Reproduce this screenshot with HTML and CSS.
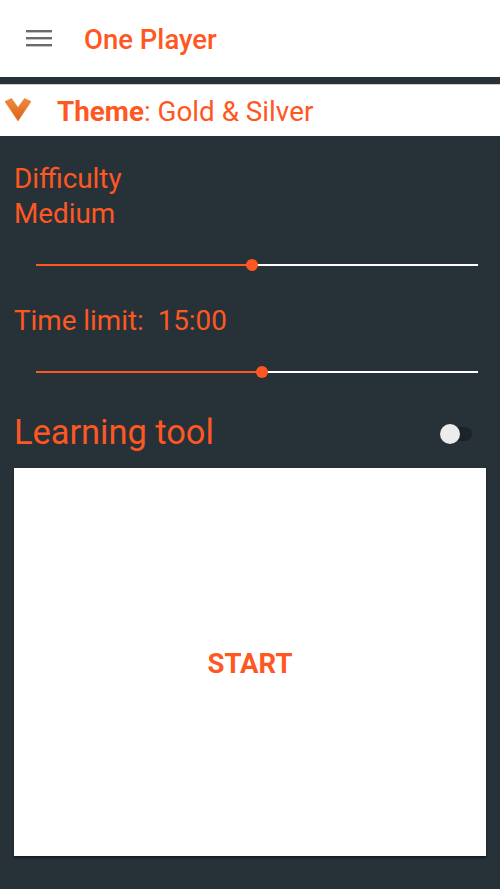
FILE: index.html
```html
<!DOCTYPE html>
<html>
<head>
<meta charset="utf-8">
<link rel="stylesheet" href="styles.css">
</head>
<body>
<header class="appbar">
  <svg class="menu" width="26" height="20" viewBox="0 0 26 20"><rect x="0" y="2" width="26" height="2.4" fill="#6b6b6b"/><rect x="0" y="9" width="26" height="2.4" fill="#6b6b6b"/><rect x="0" y="16" width="26" height="2.4" fill="#6b6b6b"/></svg>
  <span class="title">One Player</span>
</header>
<div class="theme">
  <svg class="chev" width="26" height="24" viewBox="0 0 26 24">
    <defs><linearGradient id="g" x1="0" y1="0" x2="0" y2="1"><stop offset="0" stop-color="#f08a3a"/><stop offset="1" stop-color="#d8641e"/></linearGradient></defs>
    <polygon points="0,3.5 6.5,0.5 13,9.5 19.5,0.5 26,3.5 13,23" fill="url(#g)" stroke="#e8782c" stroke-width="0.6" stroke-linejoin="round"/>
  </svg>
  <span class="theme-text"><b>Theme</b>: Gold &amp; Silver</span>
</div>
<main class="content">
  <div class="label two">Difficulty<br>Medium</div>
  <div class="slider s1"><div class="fill" style="width:216px"></div><div class="thumb" style="left:216px"></div></div>
  <div class="label">Time limit:&nbsp; 15:00</div>
  <div class="slider s2"><div class="fill" style="width:226px"></div><div class="thumb" style="left:226px"></div></div>
  <div class="learn">
    <span class="learn-text">Learning tool</span>
    <div class="toggle"><div class="knob"></div></div>
  </div>
  <div class="card"><span class="start">START</span></div>
</main>
</body>
</html>
```
FILE: styles.css
```css
* { box-sizing: border-box; }
html, body { margin: 0; padding: 0; }
body {
  width: 500px;
  height: 889px;
  background: #263238;
  font-family: Roboto, "Noto Sans", sans-serif;
  color: #ff5722;
  overflow: hidden;
}
.appbar {
  height: 77px;
  background: #fff;
  display: flex;
  align-items: center;
  padding-left: 26px;
}
.menu { display: block; margin-top: -2px; }
.title {
  margin-left: 32px;
  font-size: 27.5px;
  font-weight: 500;
  color: #ff5722;
  margin-top: 2px;
}
.theme {
  margin-top: 7px;
  height: 52px;
  background: #fff;
  display: flex;
  align-items: center;
  padding-left: 5px;
  border-top: 1px solid #c9cdd0;
}
.chev { display: block; margin-top: -2px; }
.theme-text {
  margin-left: 26px;
  font-size: 27.8px;
  color: #ff5722;
  margin-top: 2px;
}
.theme-text b { font-weight: 700; }
.content {
  padding: 25px 14px 0 14px;
  display: flex;
  flex-direction: column;
}
.label {
  font-size: 27.8px;
  line-height: 35px;
}
.slider {
  position: relative;
  margin: 0 8px 0 22px;
  height: 2px;
  background: #fff;
}
.s1 { margin-top: 33px; margin-bottom: 37px; }
.s2 { margin-top: 33px; margin-bottom: 41px; }
.fill { height: 2px; background: #ff5722; }
.thumb {
  position: absolute;
  top: -5px;
  width: 12px;
  height: 12px;
  margin-left: -6px;
  border-radius: 50%;
  background: #ff5722;
}
.learn {
  display: flex;
  align-items: center;
  justify-content: space-between;
  height: 36px;
}
.learn-text { font-size: 34.4px; }
.toggle {
  position: relative;
  width: 32px;
  height: 14px;
  border-radius: 7px;
  background: #1c2429;
  margin-right: 14px;
  margin-top: 3px;
}
.knob {
  position: absolute;
  left: 0;
  top: -3px;
  width: 20px;
  height: 20px;
  border-radius: 50%;
  background: #ececec;
}
.card {
  margin-top: 18px;
  height: 388px;
  background: #fff;
  display: flex;
  align-items: center;
  justify-content: center;
  box-shadow: 0 2px 2px rgba(0,0,0,0.45);
}
.start {
  font-size: 27.5px;
  font-weight: 700;
  color: #ff5722;
  margin-top: 2px;
}
```
